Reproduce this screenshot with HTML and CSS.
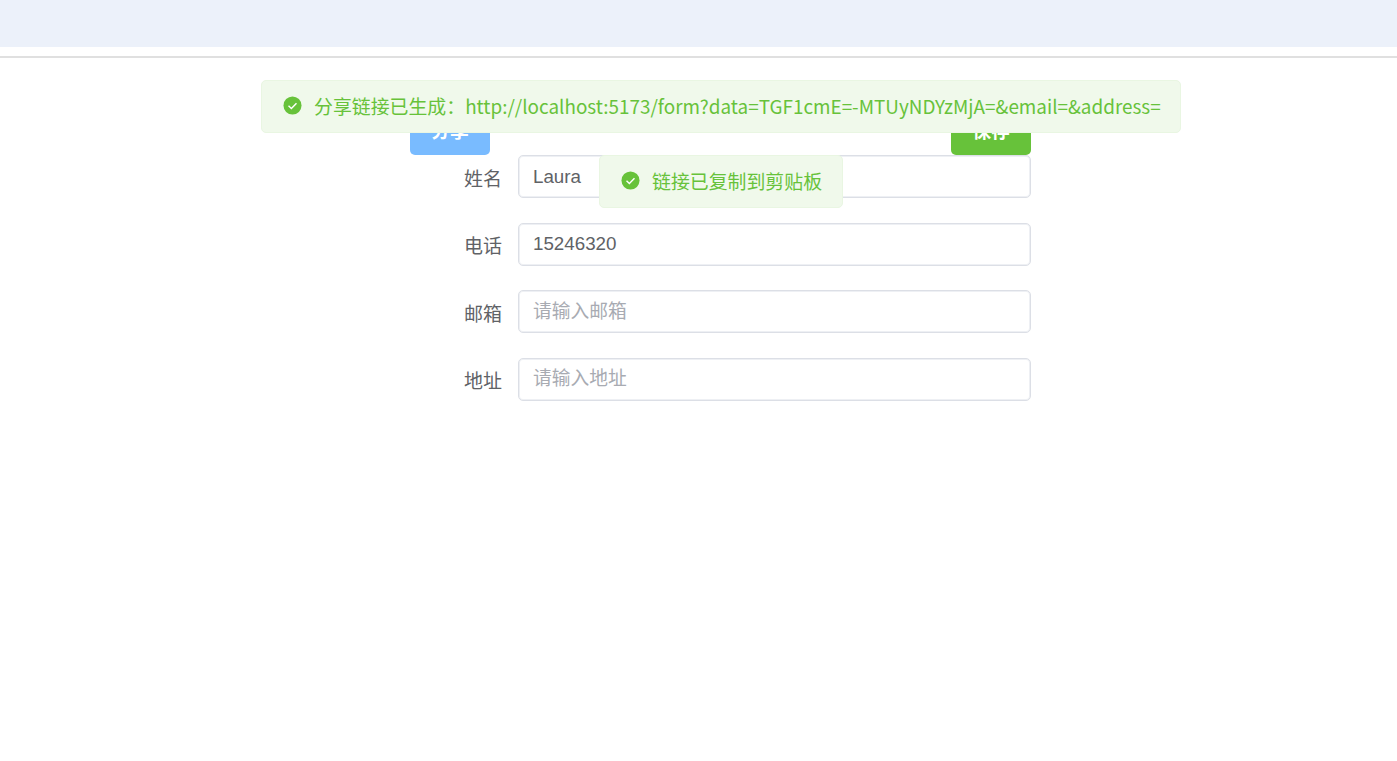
FILE: index.html
```html
<!DOCTYPE html>
<html lang="zh-CN">
<head>
<meta charset="utf-8">
<title>表单</title>
<link rel="stylesheet" href="styles.css">
</head>
<body>
<header class="top-band"></header>
<hr class="divider">
<main class="content">
  <div class="actions">
    <button class="btn btn-share" type="button">分享</button>
    <button class="btn btn-save" type="button">保存</button>
  </div>
  <form class="form">
    <div class="row"><label class="label">姓名</label><input class="input" value="Laura"></div>
    <div class="row"><label class="label">电话</label><input class="input" value="15246320"></div>
    <div class="row"><label class="label">邮箱</label><input class="input" placeholder="请输入邮箱"></div>
    <div class="row"><label class="label">地址</label><input class="input" placeholder="请输入地址"></div>
  </form>
</main>
<div class="message message-link">
  <svg class="msg-icon" viewBox="0 0 20 20"><circle cx="10" cy="10" r="9.5" fill="#67c23a"/><path d="M5.8 10.3l3 2.9 5.4-5.6" fill="none" stroke="#fff" stroke-width="1.5"/></svg>
  <span class="msg-text">分享链接已生成：http://localhost:5173/form?data=TGF1cmE=-MTUyNDYzMjA=&amp;email=&amp;address=</span>
</div>
<div class="message message-copy">
  <svg class="msg-icon" viewBox="0 0 20 20"><circle cx="10" cy="10" r="9.5" fill="#67c23a"/><path d="M5.8 10.3l3 2.9 5.4-5.6" fill="none" stroke="#fff" stroke-width="1.5"/></svg>
  <span class="msg-text">链接已复制到剪贴板</span>
</div>
</body>
</html>
```

FILE: styles.css
```css
html, body { margin: 0; padding: 0; height: 100%; background: #fff; overflow: hidden; }
body { font-family: "Liberation Sans", "Noto Sans CJK SC", sans-serif; color: #606266; }
.top-band { height: 47px; background: #ecf1fa; }
.divider { height: 2px; margin: 9px 0 0; border: 0; background: #e0e0e0; }
.content { width: 621px; margin: 0 0 0 410px; padding-top: 54px; }
.actions { display: flex; justify-content: space-between; height: 43px; }
.btn { width: 80px; height: 43px; border: 0; border-radius: 5px; color: #fff; font: 700 18.75px "Liberation Sans", "Noto Sans CJK SC", sans-serif; padding: 0 0 8px; }
.btn-share { background: #79bbff; }
.btn-save { background: #67c23a; }
.form { display: flex; flex-direction: column; gap: 24.6px; }
.row { display: flex; align-items: center; height: 43px; }
.label { width: 108px; padding-right: 16px; padding-top: 1px; box-sizing: border-box; text-align: right; font-size: 19px; color: #606266; }
.input { flex: 1; min-width: 0; height: 43px; box-sizing: border-box; padding: 0 14px; border: 1px solid #dcdfe6; border-radius: 5px; box-shadow: inset 0 0 0 1px #eef0f4; background: #fff; color: #606266; font: 18.75px "Liberation Sans", "Noto Sans CJK SC", sans-serif; outline: 0; }
.input::placeholder { color: #a8abb2; opacity: 1; }
.message { position: absolute; display: flex; align-items: center; box-sizing: border-box; background: #f0f9eb; border: 1px solid #e9f6e2; border-radius: 5px; color: #67c23a; font-family: "Noto Sans CJK SC", "Noto Sans", sans-serif; font-size: 18.9px; white-space: nowrap; }
.message-link { left: 261px; top: 80px; width: 920px; height: 53px; padding-left: 21px; }
.message-copy { left: 599px; top: 155px; width: 244px; height: 53px; padding-left: 21px; }
.msg-icon { width: 19px; height: 19px; margin-right: 12px; flex: none; position: relative; top: -1px; }
.msg-text { position: relative; top: -1px; white-space: nowrap; }
```
